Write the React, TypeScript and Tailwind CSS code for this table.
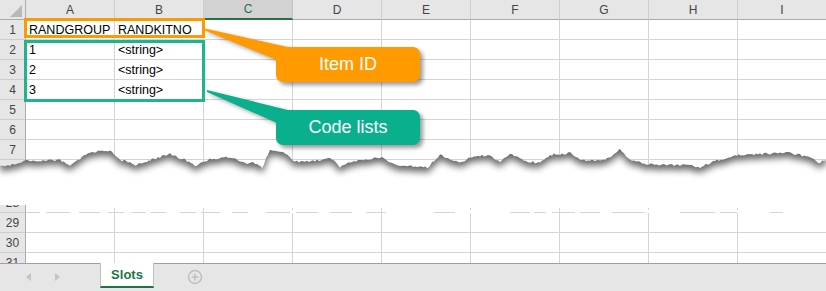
import React from 'react';

const cols = ['A', 'B', 'C', 'D', 'E', 'F', 'G', 'H', 'I'];

// rough outline of the tear, picked off the screenshot
const edgePoints: [number, number][] = [
    [0, 167], [10, 165], [25, 161], [60, 160], [70, 166], [90, 152], [110, 151], [120, 160], [130, 162],
    [135, 165], [150, 160], [170, 154], [185, 160], [195, 166], [210, 159], [230, 157], [245, 163],
    [255, 163], [262, 168], [270, 150], [285, 153], [295, 162], [320, 160], [330, 157], [340, 167],
    [350, 162], [380, 157], [395, 165], [428, 167], [440, 155], [450, 159], [460, 163], [470, 157],
    [490, 155], [500, 162], [510, 153], [525, 161], [540, 163], [550, 155], [570, 153], [580, 160],
    [605, 160], [620, 150], [630, 159], [645, 164], [670, 165], [690, 165], [700, 167], [715, 161],
    [740, 155], [760, 154], [790, 153], [810, 157], [818, 163], [826, 160]
];

const noise = (x: number) => {
    const v = Math.sin(x * 12.9898) * 43758.5453;
    return v - Math.floor(v) - 0.5;
};

const buildEdge = () => {
    const pts: string[] = [];
    for (let i = 0; i < edgePoints.length - 1; i++) {
        const [x0, y0] = edgePoints[i];
        const [x1, y1] = edgePoints[i + 1];
        for (let x = x0; x < x1; x += 2) {
            const t = (x - x0) / (x1 - x0);
            const y = y0 + (y1 - y0) * t + noise(x) * 2.2;
            pts.push(`L${x},${y.toFixed(1)}`);
        }
    }
    pts.push('L826,160');
    return pts.join(' ');
};

const edge = buildEdge();
const belowPath = `M0,205 L0,167 ${edge} L826,205 Z`;
const abovePath = `M0,0 L0,167 ${edge} L826,0 Z`;

// bits of the row 28 line that the tear eats
const lineGaps: [number, number][] = [
    [40, 46], [70, 79], [100, 108], [124, 131], [146, 151], [166, 180], [196, 201], [220, 232],
    [248, 266], [290, 296], [318, 330], [352, 366], [386, 434], [455, 510], [530, 534], [546, 552],
    [575, 580], [600, 612], [645, 680], [715, 720], [737, 770], [783, 826]
];

const Row: React.FC<{ n: number; a?: string; b?: string }> = ({ n, a, b }) => (
    <div className="flex h-[20px] shrink-0">
        <div className="w-[26px] shrink-0 bg-[#e6e6e6] border-r border-r-[#ababab] border-b border-b-[#cdcdcd] flex items-center justify-center text-[12px] text-[#444]">
            {n}
        </div>
        {cols.map((c, i) => (
            <div
                key={c}
                className="w-[89px] shrink-0 border-r border-b border-[#d4d4d4] pl-[3px] pt-px flex items-center text-[12.5px] text-black whitespace-nowrap"
            >
                {i === 0 ? a : i === 1 ? b : ''}
            </div>
        ))}
    </div>
);

const HeaderRow: React.FC = () => (
    <div className="flex h-[20px] shrink-0">
        <div className="w-[26px] shrink-0 bg-[#e6e6e6] border-r border-r-[#ababab] border-b border-b-[#ababab] relative">
            <svg width="26" height="20" className="absolute left-0 top-0">
                <polygon points="22,5 22,17 10,17" fill="#b8b8b8" />
            </svg>
        </div>
        {cols.map((c) =>
            c === 'C' ? (
                <div
                    key={c}
                    className="w-[89px] shrink-0 bg-[#d2d2d2] border-r border-r-[#c0c0c0] border-b-2 border-b-[#217346] flex items-center justify-center text-[12px] text-[#217346]"
                >
                    {c}
                </div>
            ) : (
                <div
                    key={c}
                    className="w-[89px] shrink-0 bg-[#e6e6e6] border-r border-r-[#cdcdcd] border-b border-b-[#ababab] flex items-center justify-center text-[12px] text-[#444]"
                >
                    {c}
                </div>
            )
        )}
    </div>
);

export default function App() {
    return (
        <div className="w-[826px] h-[291px] bg-white overflow-hidden flex flex-col font-['Liberation_Sans',Arial,sans-serif]">
            {/* upper sheet, torn off after row 8 */}
            <div className="relative h-[205px] shrink-0 overflow-hidden">
                <HeaderRow />
                <Row n={1} a="RANDGROUP" b="RANDKITNO" />
                <Row n={2} a="1" b="<string>" />
                <Row n={3} a="2" b="<string>" />
                <Row n={4} a="3" b="<string>" />
                <Row n={5} />
                <Row n={6} />
                <Row n={7} />
                <Row n={8} />
                <Row n={9} />

                <svg width="826" height="205" className="absolute left-0 top-0">
                    <defs>
                        <filter id="tearBlur" x="-5%" y="-20%" width="110%" height="160%">
                            <feGaussianBlur stdDeviation="3.5" />
                        </filter>
                        <clipPath id="belowTear">
                            <path d={belowPath} />
                        </clipPath>
                    </defs>
                    <path d={belowPath} fill="#fff" />
                    <g clipPath="url(#belowTear)">
                        <path d={abovePath} fill="#000" opacity="0.6" filter="url(#tearBlur)" transform="translate(0,5)" />
                    </g>
                </svg>

                {/* highlight boxes */}
                <div className="absolute left-[24px] top-[18px] w-[181px] h-[20px] border-[3px] border-[#ff9900]" />
                <div className="absolute left-[24px] top-[40px] w-[181px] h-[62px] border-[3px] border-[#1fb48e]" />

                {/* callout pointers */}
                <svg width="826" height="205" className="absolute left-0 top-0 drop-shadow-[2px_2px_2px_rgba(0,0,0,0.35)]">
                    <polygon points="205,28.5 292,48 292,64 277,60 205,30.5" fill="#ff9a00" />
                    <polygon points="207,90 292,111 292,127 277,123 207,92" fill="#0aaf8e" />
                </svg>

                <div className="absolute left-[276px] top-[47px] w-[144px] h-[35px] rounded-[7px] bg-[#ff9a00] shadow-[3px_3px_4px_rgba(0,0,0,0.4)] flex items-center justify-center text-white text-[18px]">
                    Item ID
                </div>
                <div className="absolute left-[276px] top-[110px] w-[144px] h-[35px] rounded-[7px] bg-[#0aaf8e] shadow-[3px_3px_4px_rgba(0,0,0,0.4)] flex items-center justify-center text-white text-[18px]">
                    Code lists
                </div>
            </div>

            {/* lower sheet, rows 28 onwards */}
            <div className="relative h-[58px] shrink-0 overflow-hidden">
                <div className="-mt-[12px] flex flex-col">
                    <Row n={28} />
                    <Row n={29} />
                    <Row n={30} />
                    <Row n={31} />
                </div>
                <div className="absolute left-[26px] top-0 w-[800px] h-[3px] bg-white" />
                <svg width="826" height="10" className="absolute left-0 top-0">
                    {lineGaps.map(([x0, x1]) => (
                        <rect key={x0} x={x0} y={5} width={x1 - x0} height={3} fill="#fff" />
                    ))}
                </svg>
            </div>

            {/* sheet tabs */}
            <div className="h-[28px] shrink-0 bg-[#e6e6e6] border-t border-[#a0a0a0] flex">
                <div className="w-[100px] shrink-0 flex items-center pb-[2px]">
                    <svg width="100" height="12">
                        <polygon points="26,6 31,2 31,10" fill="#c4c4c4" />
                        <polygon points="60,6 55,2 55,10" fill="#c4c4c4" />
                    </svg>
                </div>
                <div className="w-[54px] h-[25px] -mt-px bg-white border-x border-[#c0c0c0] border-b-2 border-b-[#217346] flex items-center justify-center text-[13px] font-bold text-[#217346]">
                    Slots
                </div>
                <div className="ml-[33px] flex items-center pb-[2px]">
                    <svg width="16" height="16">
                        <circle cx="8" cy="8" r="6.5" fill="none" stroke="#bdbdbd" strokeWidth="1.4" />
                        <line x1="8" y1="4.5" x2="8" y2="11.5" stroke="#bdbdbd" strokeWidth="1.4" />
                        <line x1="4.5" y1="8" x2="11.5" y2="8" stroke="#bdbdbd" strokeWidth="1.4" />
                    </svg>
                </div>
            </div>
        </div>
    );
}
